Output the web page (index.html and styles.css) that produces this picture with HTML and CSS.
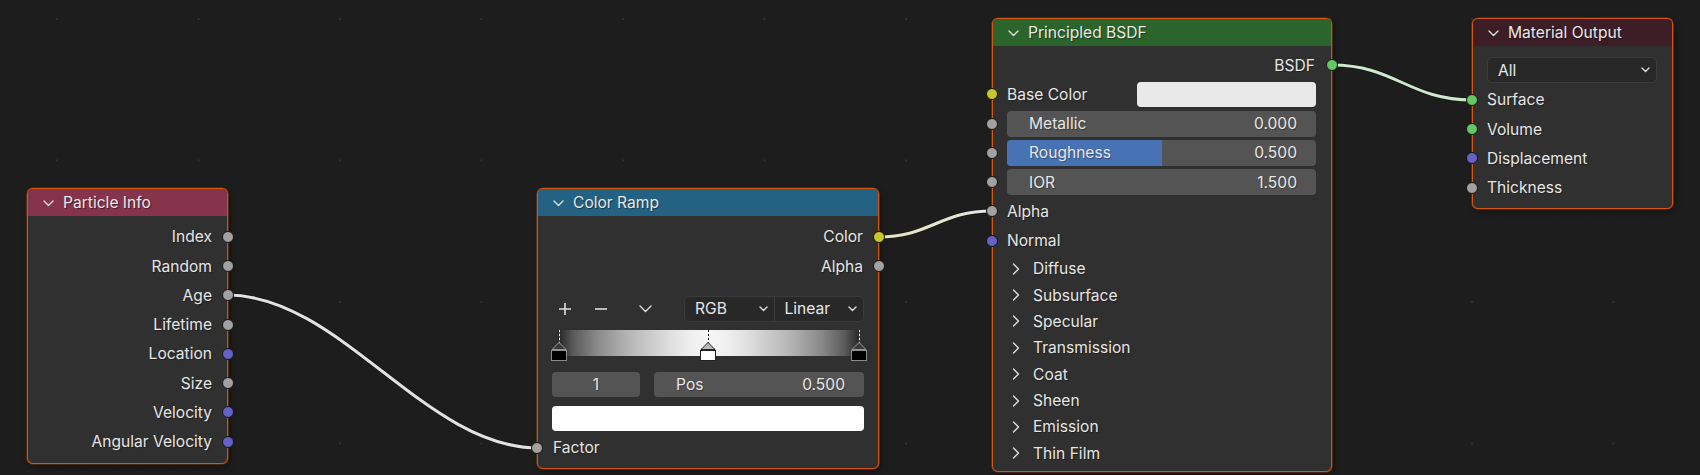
FILE: index.html
```html
<!DOCTYPE html>
<html>
<head>
<meta charset="utf-8">
<link rel="stylesheet" href="styles.css">
</head>
<body>
<div class="canvas">
  <svg class="links" width="1700" height="475" viewBox="0 0 1700 475">
    <defs>
      <linearGradient id="g1" x1="0" x2="1" y1="0" y2="0">
        <stop offset="0" stop-color="#e4e4bc"/>
        <stop offset="1" stop-color="#e6e6e6"/>
      </linearGradient>
    </defs>
    <path class="shadow" d="M227,295 C340,295 425,448 538,448"/>
    <path class="wire" stroke="#e2e2e2" d="M227,295 C340,295 425,448 538,448"/>
    <path class="shadow" d="M878,237 C930,237 940,211 992,211"/>
    <path class="wire" stroke="url(#g1)" d="M878,237 C930,237 940,211 992,211"/>
    <path class="shadow" d="M1332,65 C1395,65 1409,100 1472,100"/>
    <path class="wire" stroke="#cde8cd" d="M1332,65 C1395,65 1409,100 1472,100"/>
  </svg>

  <!-- Particle Info -->
  <div class="node particle">
    <div class="header h-particle">
      <svg class="chev" width="11" height="7" viewBox="0 0 11 7"><polyline points="1,1 5.5,5.5 10,1"/></svg>
      <span>Particle Info</span>
    </div>
    <div class="body pad-particle">
      <div class="row out"><span>Index</span><i class="sock gray"></i></div>
      <div class="row out"><span>Random</span><i class="sock gray"></i></div>
      <div class="row out"><span>Age</span><i class="sock gray"></i></div>
      <div class="row out"><span>Lifetime</span><i class="sock gray"></i></div>
      <div class="row out"><span>Location</span><i class="sock blue"></i></div>
      <div class="row out"><span>Size</span><i class="sock gray"></i></div>
      <div class="row out"><span>Velocity</span><i class="sock blue"></i></div>
      <div class="row out"><span>Angular Velocity</span><i class="sock blue"></i></div>
    </div>
  </div>

  <!-- Color Ramp -->
  <div class="node ramp">
    <div class="header h-ramp">
      <svg class="chev" width="11" height="7" viewBox="0 0 11 7"><polyline points="1,1 5.5,5.5 10,1"/></svg>
      <span>Color Ramp</span>
    </div>
    <div class="body pad-ramp">
      <div class="row out"><span>Color</span><i class="sock yellow"></i></div>
      <div class="row out"><span>Alpha</span><i class="sock gray"></i></div>
      <div class="controls">
        <div class="iconbtn"><svg width="14" height="14" viewBox="0 0 14 14"><path d="M7 1V13M1 7H13"/></svg></div>
        <div class="iconbtn minus"><svg width="14" height="14" viewBox="0 0 14 14"><path d="M1 7H13"/></svg></div>
        <div class="iconbtn chevbtn"><svg width="13" height="8" viewBox="0 0 13 8"><polyline points="1,1 6.5,6.5 12,1"/></svg></div>
        <div class="dropdown split">
          <div class="dd-part"><span>RGB</span><svg class="ddchev" width="9" height="6" viewBox="0 0 9 6"><polyline points="1,1 4.5,4.5 8,1"/></svg></div>
          <div class="dd-part"><span>Linear</span><svg class="ddchev" width="9" height="6" viewBox="0 0 9 6"><polyline points="1,1 4.5,4.5 8,1"/></svg></div>
        </div>
      </div>
      <div class="rampwrap">
        <div class="rampbar"></div>
        <div class="marker m-left"><i class="dash"></i><svg width="16" height="8" viewBox="0 0 16 8"><polygon points="8,0.5 15,7.5 1,7.5"/></svg><b></b></div>
        <div class="marker m-mid active"><i class="dash"></i><svg width="16" height="8" viewBox="0 0 16 8"><polygon points="8,0.5 15,7.5 1,7.5"/></svg><b></b></div>
        <div class="marker m-right"><i class="dash"></i><svg width="16" height="8" viewBox="0 0 16 8"><polygon points="8,0.5 15,7.5 1,7.5"/></svg><b></b></div>
      </div>
      <div class="numrow">
        <div class="field idx"><span>1</span></div>
        <div class="field pos"><span>Pos</span><span>0.500</span></div>
      </div>
      <div class="whitebar"></div>
      <div class="row in"><i class="sock gray"></i><span>Factor</span></div>
    </div>
  </div>

  <!-- Principled BSDF -->
  <div class="node bsdf">
    <div class="header h-bsdf">
      <svg class="chev" width="11" height="7" viewBox="0 0 11 7"><polyline points="1,1 5.5,5.5 10,1"/></svg>
      <span>Principled BSDF</span>
    </div>
    <div class="body pad-bsdf">
      <div class="row out r16"><span>BSDF</span><i class="sock green"></i></div>
      <div class="row in"><i class="sock yellow"></i><span>Base Color</span><div class="swatch"></div></div>
      <div class="row in frow"><i class="sock gray"></i><div class="field wide"><span>Metallic</span><span>0.000</span></div></div>
      <div class="row in frow"><i class="sock gray"></i><div class="field wide rough"><div class="fill"></div><span>Roughness</span><span>0.500</span></div></div>
      <div class="row in frow"><i class="sock gray"></i><div class="field wide"><span>IOR</span><span>1.500</span></div></div>
      <div class="row in"><i class="sock gray"></i><span>Alpha</span></div>
      <div class="row in"><i class="sock blue"></i><span>Normal</span></div>
      <div class="panels">
        <div class="panel"><svg class="pchev" width="8" height="12" viewBox="0 0 8 12"><polyline points="1.5,1 6.5,6 1.5,11"/></svg><span>Diffuse</span></div>
        <div class="panel"><svg class="pchev" width="8" height="12" viewBox="0 0 8 12"><polyline points="1.5,1 6.5,6 1.5,11"/></svg><span>Subsurface</span></div>
        <div class="panel"><svg class="pchev" width="8" height="12" viewBox="0 0 8 12"><polyline points="1.5,1 6.5,6 1.5,11"/></svg><span>Specular</span></div>
        <div class="panel"><svg class="pchev" width="8" height="12" viewBox="0 0 8 12"><polyline points="1.5,1 6.5,6 1.5,11"/></svg><span>Transmission</span></div>
        <div class="panel"><svg class="pchev" width="8" height="12" viewBox="0 0 8 12"><polyline points="1.5,1 6.5,6 1.5,11"/></svg><span>Coat</span></div>
        <div class="panel"><svg class="pchev" width="8" height="12" viewBox="0 0 8 12"><polyline points="1.5,1 6.5,6 1.5,11"/></svg><span>Sheen</span></div>
        <div class="panel"><svg class="pchev" width="8" height="12" viewBox="0 0 8 12"><polyline points="1.5,1 6.5,6 1.5,11"/></svg><span>Emission</span></div>
        <div class="panel"><svg class="pchev" width="8" height="12" viewBox="0 0 8 12"><polyline points="1.5,1 6.5,6 1.5,11"/></svg><span>Thin Film</span></div>
      </div>
    </div>
  </div>

  <!-- Material Output -->
  <div class="node matout">
    <div class="header h-out">
      <svg class="chev" width="11" height="7" viewBox="0 0 11 7"><polyline points="1,1 5.5,5.5 10,1"/></svg>
      <span>Material Output</span>
    </div>
    <div class="body pad-out">
      <div class="dropdown single"><span>All</span><svg class="ddchev" width="9" height="6" viewBox="0 0 9 6"><polyline points="1,1 4.5,4.5 8,1"/></svg></div>
      <div class="row in"><i class="sock green"></i><span>Surface</span></div>
      <div class="row in"><i class="sock green"></i><span>Volume</span></div>
      <div class="row in"><i class="sock blue"></i><span>Displacement</span></div>
      <div class="row in"><i class="sock gray"></i><span>Thickness</span></div>
    </div>
  </div>
</div>
</body>
</html>
```

FILE: styles.css
```css
html, body {
  margin: 0;
  padding: 0;
  background: #1d1d1d;
}

.canvas {
  position: relative;
  width: 1700px;
  height: 475px;
  overflow: hidden;
  background-color: #1d1d1d;
  background-image:
    radial-gradient(circle at center, #303030 0, #303030 1.2px, transparent 1.3px),
    radial-gradient(circle at center, #272727 0, #272727 0.8px, transparent 0.9px);
  background-size: 141.5px 141.5px, 28.3px 28.3px;
  background-position: -13.75px -51.75px, -14.15px 4.85px;
  font-family: Inter, "Noto Sans", "DejaVu Sans", sans-serif;
  font-size: 15.6px;
  color: #e5e5e5;
}

.links {
  position: absolute;
  left: 0;
  top: 0;
  z-index: 0;
}
.links path {
  fill: none;
  stroke-linecap: round;
}
.links .shadow {
  stroke: #111;
  stroke-opacity: 0.7;
  stroke-width: 4.5;
}
.links .wire {
  stroke-width: 3;
}

/* Nodes */
.node {
  position: absolute;
  z-index: 1;
  box-sizing: border-box;
  background: #303030;
  border: 1px solid #d4560e;
  border-radius: 6px;
  box-shadow: 0 0 0 0.6px rgba(210, 85, 14, 0.55), 2px 3px 6px rgba(0, 0, 0, 0.35);
}
.particle { left: 27px; top: 188px; width: 201px; height: 276px; }
.ramp     { left: 537px; top: 188px; width: 342px; height: 281px; }
.bsdf     { left: 992px; top: 18px; width: 340px; height: 454px; }
.matout   { left: 1472px; top: 18px; width: 201px; height: 191px; }

.header {
  height: 27px;
  box-sizing: border-box;
  display: flex;
  align-items: center;
  padding-left: 15px;
  gap: 9px;
  border-radius: 5px 5px 0 0;
  color: #e8e8e8;
  text-shadow: 1px 1px 1px rgba(0, 0, 0, 0.45);
}
.h-particle { background: #86334c; }
.h-ramp     { background: #246283; }
.h-bsdf     { background: #2b652b; }
.h-out      { background: #3d1e27; }

.chev polyline, .ddchev polyline, .pchev polyline, .chevbtn polyline {
  fill: none;
  stroke: #dedede;
  stroke-width: 1.4;
  stroke-linecap: round;
  stroke-linejoin: round;
}
.chev { margin-top: 1px; }

.body {
  display: flex;
  flex-direction: column;
}
.pad-particle { padding-top: 6.3px; }
.pad-ramp     { padding-top: 6.3px; }
.pad-bsdf     { padding-top: 4.4px; }
.pad-out      { padding-top: 11px; }

.row {
  position: relative;
  height: 29.25px;
  display: flex;
  align-items: center;
  padding: 0 15px;
  flex-shrink: 0;
  text-shadow: 1px 1px 1px rgba(0, 0, 0, 0.35);
}
.row.out { justify-content: flex-end; }
.row.r16 { padding-right: 16px; }
.row.in { padding-left: 14px; }

.sock {
  position: absolute;
  top: 50%;
  width: 12px;
  height: 12px;
  margin-top: -6px;
  box-sizing: border-box;
  border-radius: 50%;
  border: 1px solid #151515;
}
.row.out .sock { right: -7px; }
.row.in .sock  { left: -7px; }
.gray   { background: #a1a1a1; }
.blue   { background: #6363c7; }
.yellow { background: #c7c729; }
.green  { background: #63c763; }

/* Color ramp controls */
.controls {
  display: flex;
  align-items: center;
  height: 26px;
  margin-top: 15px;
  padding: 0 14px;
}
.iconbtn {
  width: 26px;
  height: 26px;
  display: flex;
  align-items: center;
  justify-content: center;
}
.iconbtn path {
  stroke: #e0e0e0;
  stroke-width: 1.6;
  fill: none;
}
.iconbtn.minus { margin-left: 10px; }
.iconbtn.chevbtn { margin-left: 18px; }

.dropdown {
  box-sizing: border-box;
  height: 26px;
  background: #282828;
  border: 1px solid #3b3b3b;
  border-radius: 5px;
  display: flex;
  align-items: center;
  color: #e6e6e6;
}
.dropdown.split {
  margin-left: auto;
  width: 180px;
}
.dd-part {
  flex: 1;
  height: 100%;
  display: flex;
  align-items: center;
  justify-content: space-between;
  padding: 0 6px 0 10px;
  box-sizing: border-box;
}
.dd-part + .dd-part {
  border-left: 1px solid #3b3b3b;
}
.dropdown.single {
  margin: 0 15px 0 14px;
  padding: 0 6px 0 10px;
  justify-content: space-between;
}

.rampwrap {
  position: relative;
  height: 31px;
  margin: 8px 14px 0 14px;
}
.rampbar {
  position: absolute;
  left: 6px;
  right: 4px;
  top: 0;
  height: 26px;
  background: linear-gradient(to right,
    #232323 0%, #5a5a5a 5%, #878787 12.5%, #a8a8a8 20%, #bbbbbb 25%,
    #d2d2d2 33%, #e0e0e0 37.5%, #efefef 44%, #f6f6f6 50%,
    #efefef 56%, #e0e0e0 62.5%, #d2d2d2 67%, #bbbbbb 75%,
    #a8a8a8 80%, #878787 87.5%, #5a5a5a 95%, #232323 100%);
}
.marker {
  position: absolute;
  top: 0;
  width: 16px;
  height: 31px;
}
.m-left  { left: -1px; }
.m-mid   { left: 148px; }
.m-right { left: 299px; }
.marker .dash {
  position: absolute;
  left: 7.5px;
  top: 0;
  width: 1px;
  height: 13px;
  background: repeating-linear-gradient(to bottom, #111 0 2px, #f0f0f0 2px 4px);
}
.m-left .dash, .m-right .dash {
  background: repeating-linear-gradient(to bottom, #f0f0f0 0 2px, #555 2px 4px);
}
.marker svg {
  position: absolute;
  left: 0;
  top: 12px;
}
.marker polygon {
  fill: #3a3a3a;
  stroke: #9a9a9a;
  stroke-width: 1;
}
.marker.active polygon {
  fill: #b8b8b8;
  stroke: #222;
}
.marker b {
  position: absolute;
  left: 0;
  top: 20px;
  width: 16px;
  height: 11px;
  box-sizing: border-box;
  background: #000;
  border: 1px solid #8a8a8a;
}
.marker.active b {
  background: #fff;
  border-color: #222;
}

.numrow {
  display: flex;
  gap: 14px;
  margin: 11px 14px 0 14px;
  height: 25px;
}
.field {
  position: relative;
  box-sizing: border-box;
  height: 25px;
  background: #545454;
  border-radius: 4px;
  display: flex;
  align-items: center;
  justify-content: space-between;
  color: #e6e6e6;
  overflow: hidden;
  text-shadow: 1px 1px 1px rgba(0, 0, 0, 0.3);
}
.field.idx {
  width: 88px;
  justify-content: center;
}
.field.pos {
  flex: 1;
  padding: 0 19px 0 22px;
}
.whitebar {
  height: 25px;
  margin: 9px 14px 0 14px;
  background: #ffffff;
  border-radius: 4px;
}
.pad-ramp .row.in { margin-top: 2.5px; padding-left: 15px; }

/* Principled */
.swatch {
  margin-left: auto;
  width: 179px;
  height: 25px;
  background: #e9e9e9;
  border-radius: 4px;
}
.row.in:has(.swatch) { padding-right: 15px; }
.frow { padding-right: 15px; }
.field.wide {
  flex: 1;
  height: 26px;
  padding: 0 19px 0 22px;
}
.field span { position: relative; z-index: 1; }
.rough .fill {
  position: absolute;
  left: 0;
  top: 0;
  bottom: 0;
  width: 50%;
  background: #4772b3;
}

.panels {
  display: flex;
  flex-direction: column;
  margin-top: 0.3px;
}
.panel {
  height: 26.4px;
  display: flex;
  align-items: center;
  padding-left: 19px;
  gap: 13px;
  text-shadow: 1px 1px 1px rgba(0, 0, 0, 0.35);
}

/* Material output */
.pad-out .dropdown.single { height: 26px; margin-bottom: 2.3px; }
```
